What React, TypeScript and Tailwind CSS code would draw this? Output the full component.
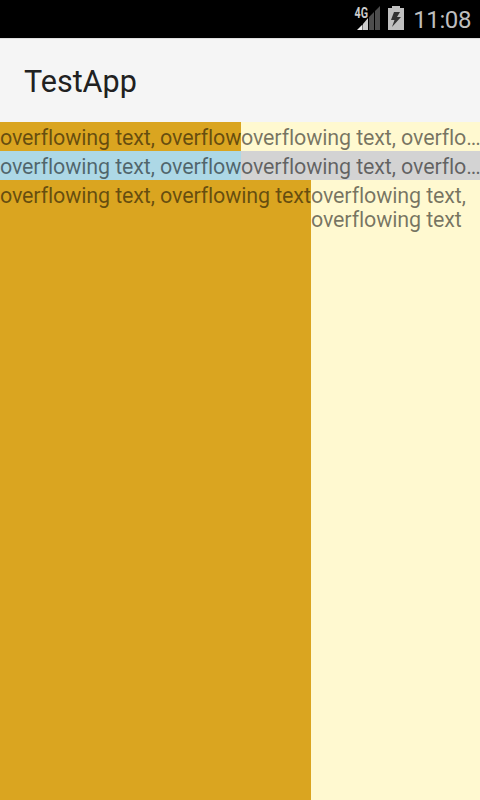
import React from "react";

const cell = "pt-1 text-[21.5px] leading-[24px] tracking-[-0.14px] whitespace-nowrap text-black/54";

export default function App() {
  return (
    <div className="flex h-[800px] w-[480px] flex-col overflow-hidden bg-[#fff9d0] font-[Roboto,sans-serif]">
      <div className="flex h-[38px] items-start justify-end bg-black pr-[9px]">
        <svg width="28" height="32" viewBox="353 0 28 32" className="mr-[7px]">
          <path d="M362.500 24.500V30H357Z" fill="#eee" />
          <path d="M363 24L368 18V30H363Z" fill="#ccc" />
          <path d="M369 17L374 12V30H369Z M375 11L380 6V30H375Z" fill="#4d4d4d" />
          <text x="354.500" y="18" fontSize="14" fontWeight="bold" fill="#ccc" textLength="13.500" lengthAdjust="spacingAndGlyphs">4G</text>
        </svg>
        <svg width="16" height="32" viewBox="388 0 16 32" className="mr-[9px]">
          <path d="M392 6H400V8H404V30H388V8H392Z" fill="#c0c0c0" />
          <path d="M394 12H400L397 17H401L392 27L394.500 20H391Z" fill="#333" />
        </svg>
        <span className="pt-px text-[24px] leading-[38px] tracking-[-0.4px] text-[#bebebe]">11:08</span>
      </div>
      <div className="flex h-[84px] items-center border-t border-[#dedede] bg-[#f5f5f5] pt-0.5 pl-6 text-[30.5px] text-[#212121]">TestApp</div>
      <div className="flex h-[29px]">
        <div className={`${cell} w-[241px] bg-[#daa520]`}>overflowing text, overflow</div>
        <div className={`${cell} flex-1`}>overflowing text, overflo<span className="tracking-[-1.2px]">...</span></div>
      </div>
      <div className="flex h-[29px]">
        <div className={`${cell} w-[241px] bg-[#add8e6]`}>overflowing text, overflow</div>
        <div className={`${cell} flex-1 bg-[#d3d3d3]`}>overflowing text, overflo<span className="tracking-[-1.2px]">...</span></div>
      </div>
      <div className="flex flex-1">
        <div className={`${cell} w-[311px] bg-[#daa520]`}>overflowing text, overflowing text</div>
        <div className={`${cell} flex-1`}>
          overflowing text,
          <br />
          overflowing text
        </div>
      </div>
    </div>
  );
}
